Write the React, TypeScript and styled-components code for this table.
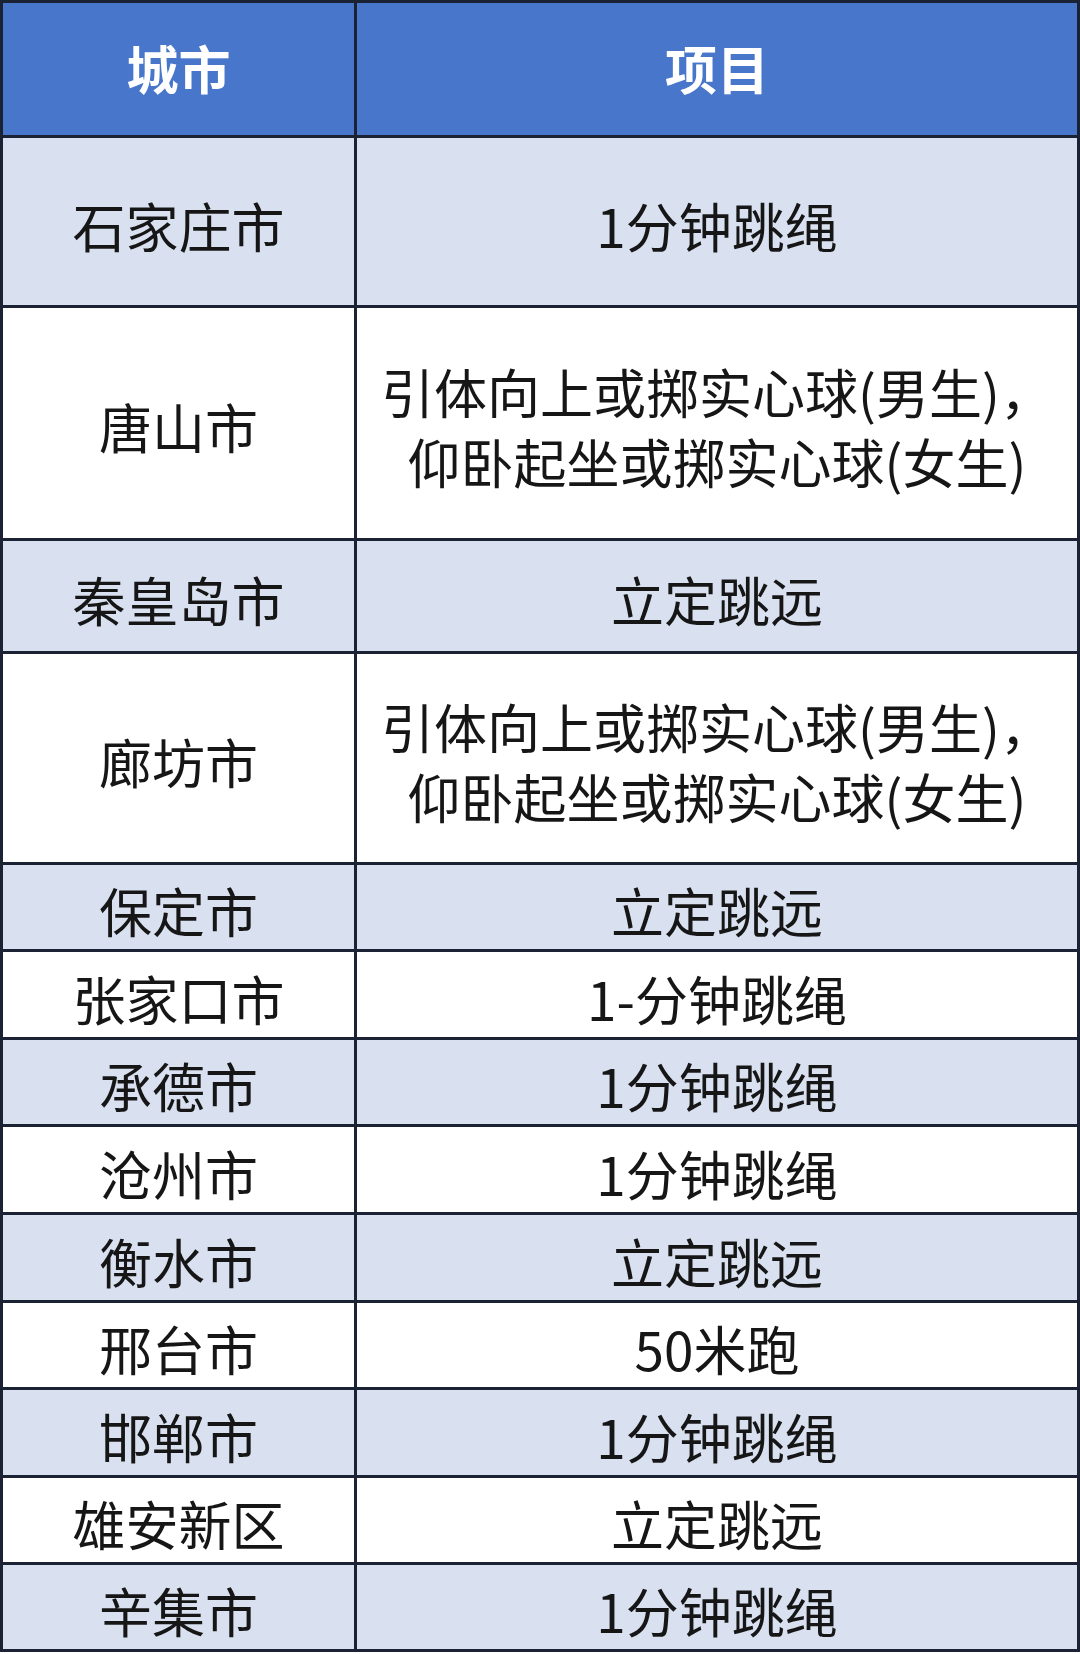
import { Fragment } from "react";
import styled, { createGlobalStyle } from "styled-components";

type Row = {
  city: string;
  item: string[];
  height: number;
};

const rows: Row[] = [
  { city: "石家庄市", item: ["1分钟跳绳"], height: 167 },
  {
    city: "唐山市",
    item: ["引体向上或掷实心球(男生)，", "仰卧起坐或掷实心球(女生)"],
    height: 230,
  },
  { city: "秦皇岛市", item: ["立定跳远"], height: 110 },
  {
    city: "廊坊市",
    item: ["引体向上或掷实心球(男生)，", "仰卧起坐或掷实心球(女生)"],
    height: 208,
  },
  { city: "保定市", item: ["立定跳远"], height: 84 },
  { city: "张家口市", item: ["1-分钟跳绳"], height: 85 },
  { city: "承德市", item: ["1分钟跳绳"], height: 84 },
  { city: "沧州市", item: ["1分钟跳绳"], height: 85 },
  { city: "衡水市", item: ["立定跳远"], height: 85 },
  { city: "邢台市", item: ["50米跑"], height: 84 },
  { city: "邯郸市", item: ["1分钟跳绳"], height: 85 },
  { city: "雄安新区", item: ["立定跳远"], height: 84 },
  { city: "辛集市", item: ["1分钟跳绳"], height: 84 },
];

const App: React.FC = () => {
  return (
    <>
      <GlobalStyle />
      <Table>
        <HeadCell>城市</HeadCell>
        <HeadCell>项目</HeadCell>
        {rows.map((row, i) => (
          <Fragment key={row.city}>
            <Cell $shaded={i % 2 === 0} $h={row.height}>
              {row.city}
            </Cell>
            <Cell $shaded={i % 2 === 0} $h={row.height}>
              <Lines>
                {row.item.map((line) => (
                  <Line key={line}>{line}</Line>
                ))}
              </Lines>
            </Cell>
          </Fragment>
        ))}
      </Table>
    </>
  );
};
export default App;

const GlobalStyle = createGlobalStyle`
  body {
    margin: 0;
    background: #ffffff;
    font-family: "Noto Sans CJK SC", "Noto Sans", sans-serif;
  }
`;

const Table = styled.div`
  display: grid;
  grid-template-columns: 351px 1fr;
  gap: 3px;
  padding: 3px;
  width: 1080px;
  box-sizing: border-box;
  background: #1b2233;
`;

const HeadCell = styled.div`
  height: 132px;
  display: flex;
  align-items: center;
  justify-content: center;
  background: #4776cb;
  color: #ffffff;
  font-size: 52px;
  font-weight: 700;
  padding-bottom: 4px;
  box-sizing: border-box;
`;

const Cell = styled.div<{ $shaded: boolean; $h: number }>`
  height: ${(p) => p.$h}px;
  display: flex;
  align-items: center;
  justify-content: center;
  background: ${(p) => (p.$shaded ? "#d9e1f1" : "#ffffff")};
  color: #161616;
  font-size: 53px;
  font-weight: 400;
  padding-top: 6px;
  box-sizing: border-box;
`;

const Lines = styled.div`
  display: flex;
  flex-direction: column;
  align-items: center;
`;

const Line = styled.div`
  line-height: 70px;
  white-space: nowrap;
`;
